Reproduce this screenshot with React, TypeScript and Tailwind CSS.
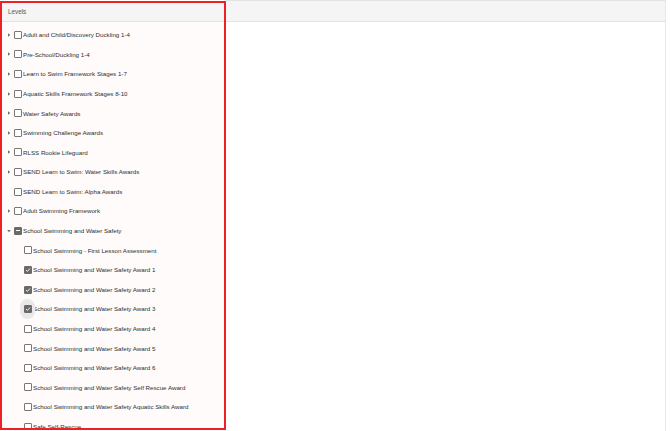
import React from 'react';

type Item = {
  label: string;
  depth: number;
  arrow?: 'right' | 'down' | null;
  state?: 'off' | 'on' | 'mixed';
  ripple?: boolean;
};

const items: Item[] = [
  { label: 'Adult and Child/Discovery Duckling 1-4', depth: 0, arrow: 'right' },
  { label: 'Pre-School/Duckling 1-4', depth: 0, arrow: 'right' },
  { label: 'Learn to Swim Framework Stages 1-7', depth: 0, arrow: 'right' },
  { label: 'Aquatic Skills Framework Stages 8-10', depth: 0, arrow: 'right' },
  { label: 'Water Safety Awards', depth: 0, arrow: 'right' },
  { label: 'Swimming Challenge Awards', depth: 0, arrow: 'right' },
  { label: 'RLSS Rookie Lifeguard', depth: 0, arrow: 'right' },
  { label: 'SEND Learn to Swim: Water Skills Awards', depth: 0, arrow: 'right' },
  { label: 'SEND Learn to Swim: Alpha Awards', depth: 0, arrow: null },
  { label: 'Adult Swimming Framework', depth: 0, arrow: 'right' },
  { label: 'School Swimming and Water Safety', depth: 0, arrow: 'down', state: 'mixed' },
  { label: 'School Swimming - First Lesson Assessment', depth: 1 },
  { label: 'School Swimming and Water Safety Award 1', depth: 1, state: 'on' },
  { label: 'School Swimming and Water Safety Award 2', depth: 1, state: 'on' },
  { label: 'School Swimming and Water Safety Award 3', depth: 1, state: 'on', ripple: true },
  { label: 'School Swimming and Water Safety Award 4', depth: 1 },
  { label: 'School Swimming and Water Safety Award 5', depth: 1 },
  { label: 'School Swimming and Water Safety Award 6', depth: 1 },
  { label: 'School Swimming and Water Safety Self Rescue Award', depth: 1 },
  { label: 'School Swimming and Water Safety Aquatic Skills Award', depth: 1 },
  { label: 'Safe Self-Rescue', depth: 1 },
];

function Arrow({ dir }: { dir: 'right' | 'down' | null | undefined }) {
  if (!dir) return <span className="w-[6px]" />;
  return (
    <svg width="6" height="6" viewBox="0 0 6 6" className="shrink-0">
      {dir === 'right' ? (
        <path d="M2 1.2 L4.2 3 L2 4.8 Z" fill="#6b6b6b" />
      ) : (
        <path d="M1.2 2 L4.8 2 L3 4.2 Z" fill="#6b6b6b" />
      )}
    </svg>
  );
}

function Box({ state, ripple }: { state?: 'off' | 'on' | 'mixed'; ripple?: boolean }) {
  const filled = state === 'on' || state === 'mixed';
  return (
    <span className="relative flex h-[8px] w-[8px] shrink-0 items-center justify-center">
      {ripple && (
        <span className="absolute left-[-4px] top-[-6px] h-[20px] w-[15px] rounded-full bg-[#e9e9e9]" />
      )}
      <span
        className={
          'relative flex h-[8px] w-[8px] items-center justify-center rounded-[1px] border ' +
          (filled ? 'border-[#6a6a6a] bg-[#6a6a6a]' : 'border-[#777777] bg-white')
        }
      >
        {state === 'on' && (
          <svg width="6" height="6" viewBox="0 0 6 6">
            <path d="M1 3.1 L2.4 4.4 L5 1.5" stroke="white" strokeWidth="0.9" fill="none" />
          </svg>
        )}
        {state === 'mixed' && <span className="h-[1px] w-[4px] bg-white" />}
      </span>
    </span>
  );
}

export default function App() {
  return (
    <div
      className="flex h-[431px] w-[670px] overflow-hidden bg-white text-[#2e2e2e]"
      style={{ fontFamily: '"Liberation Sans", Arial, sans-serif' }}
    >
      <div className="flex w-[666px] border-r border-[#e8e8e8]">
        {/* left column, outlined */}
        <div className="mt-[1px] flex h-[429px] w-[226px] shrink-0 flex-col overflow-hidden border-2 border-[#ec2027] bg-[#fffbfb]">
          <div className="flex h-[19px] shrink-0 items-center border-b border-[#e3e3e3] bg-[#f5f5f5] pl-[6px] text-[6.3px] text-[#555555]">
            Levels
          </div>
          <div className="pt-[3px]">
            {items.map((it) => (
              <div
                key={it.label}
                className={
                  'flex h-[19.6px] items-center text-[6.2px] ' +
                  (it.depth === 0 ? 'pl-[4px]' : 'pl-[20px]')
                }
              >
                {it.depth === 0 && <Arrow dir={it.arrow} />}
                <span className="ml-[2px]">
                  <Box state={it.state} ripple={it.ripple} />
                </span>
                <span className="ml-[1px] whitespace-nowrap">{it.label}</span>
              </div>
            ))}
          </div>
        </div>
        {/* right column */}
        <div className="flex flex-1 flex-col">
          <div className="h-[22px] border-b border-t border-[#e3e3e3] bg-[#f5f5f5]" />
          <div className="flex-1 bg-white" />
        </div>
      </div>
    </div>
  );
}
